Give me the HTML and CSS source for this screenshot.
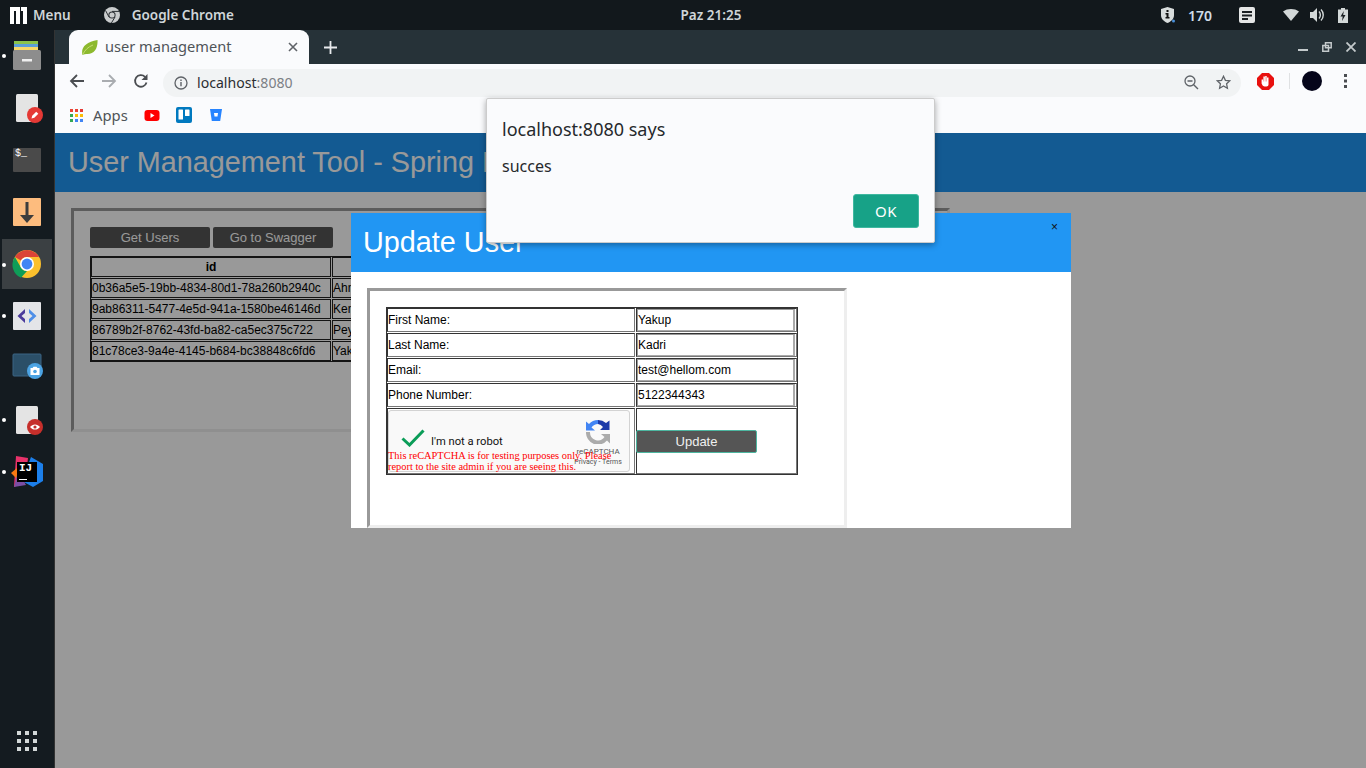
FILE: index.html
```html
<!DOCTYPE html>
<html lang="en">
<head>
    <meta charset="UTF-8">
    <meta name="viewport" content="width=device-width, initial-scale=1.0">
    <title>user management</title>
    <link rel="stylesheet" href="styles.css">
</head>
<body>

<div class="desktop">

    <!-- system panel -->
    <div class="topbar">
        <div class="topbar-left">
            <svg class="ico-menu" width="17" height="17" viewBox="0 0 17 17"><path fill="#fff" d="M0 0h10v17H6V4H4v13H0zM11 0h6v17h-4V4h-2z"/></svg>
            <span class="menu-label">Menu</span>
            <svg class="ico-chrome-small" width="16" height="16" viewBox="0 0 16 16"><circle cx="8" cy="8" r="8" fill="#c9cccd"/><circle cx="8" cy="8" r="3.600" fill="#2a2f33"/><circle cx="8" cy="8" r="2.600" fill="#c9cccd"/><path d="M8 4.400h7.400M5 10 1.600 3.600M11 10l-3.600 6" stroke="#2a2f33" stroke-width="1"/></svg>
            <span class="menu-label">Google Chrome</span>
        </div>
        <div class="clock">Paz 21:25</div>
        <div class="topbar-right">
            <svg class="ico-shield" width="15" height="18" viewBox="0 0 15 18"><path fill="#d8dcdc" d="M6.500 1 13 3v6c0 4-3 6.500-6.500 8C3 15.500 0 13 0 9V3z"/><rect x="5.500" y="4" width="2" height="2" fill="#111"/><path d="M4.500 7h3v4h1v1.500h-4V11h1V8.500h-1z" fill="#111"/><circle cx="12.500" cy="15" r="1.500" fill="#4a90d9"/></svg>
            <span class="tray-num">170</span>
            <svg class="ico-notes" width="16" height="16" viewBox="0 0 16 16"><rect width="16" height="16" rx="2" fill="#e4e6e6"/><path d="M3 4h10v2H3zM3 7.500h10v2H3zM3 11h6v2H3z" fill="#1a1f23"/></svg>
            <svg class="ico-wifi" width="16" height="12" viewBox="0 0 16 12"><path fill="#d3d8d8" d="M0 2.500C4.500-.8 11.500-.8 16 2.500L8 12z"/></svg>
            <svg class="ico-sound" width="15" height="14" viewBox="0 0 15 14"><path fill="#d3d8d8" d="M0 4h3l4-4v14l-4-4H0z"/><path d="M9 3.500c1.800 1.800 1.800 5.200 0 7M11 1.500c3 3 3 8 0 11" fill="none" stroke="#d3d8d8" stroke-width="1.400"/></svg>
            <svg class="ico-battery" width="10" height="15" viewBox="0 0 10 15"><path fill="#d3d8d8" d="M3 0h4v1.500h3V15H0V1.500h3z"/><path fill="#1a1f23" d="M5.800 3 2.500 8.500h2.200L4 13l3.500-6H5.200z"/></svg>
        </div>
    </div>

    <!-- dock -->
    <div class="dock">
        <div class="dock-list">
            <div class="dock-item running">
                <svg width="32" height="32" viewBox="0 0 32 32"><rect x="3" y="1" width="24" height="4" fill="#8bc34a"/><rect x="3" y="4" width="24" height="3" fill="#5c9fd8"/><rect x="3" y="7" width="24" height="4" fill="#f7d768"/><rect x="2" y="10" width="28" height="20" rx="1.500" fill="#8d8d8d"/><rect x="11" y="19" width="10" height="2.500" fill="#efefef"/></svg>
            </div>
            <div class="dock-item">
                <svg width="32" height="32" viewBox="0 0 32 32"><rect x="5" y="2" width="22" height="28" rx="1.500" fill="#e4e4e4"/><circle cx="24" cy="23" r="8" fill="#e53935"/><path d="m20.500 26.500.7-2.800 4-4 2.100 2.100-4 4z" fill="#fff"/></svg>
            </div>
            <div class="dock-item">
                <div class="term-icon">$_</div>
            </div>
            <div class="dock-item">
                <svg width="32" height="32" viewBox="0 0 32 32"><rect x="2" y="2" width="28" height="28" rx="1" fill="#fdbc7e"/><path d="M14.500 6h3v13H23l-7 8-7-8h5.500z" fill="#3d3d3d"/></svg>
            </div>
            <div class="dock-item active running">
                <svg width="32" height="32" viewBox="0 0 32 32"><circle cx="16" cy="16" r="14" fill="#fbc02d"/><path d="M3.900 9A14 14 0 0 1 28.100 9H16a7 7 0 0 0-6.100 3.500z" fill="#db4437"/><path d="M3.900 9 9.900 19.500A7 7 0 0 0 16 23l-6 6.800A14 14 0 0 1 3.900 9z" fill="#0f9d58"/><circle cx="16" cy="16" r="7" fill="#fff"/><circle cx="16" cy="16" r="5.400" fill="#4285f4"/></svg>
            </div>
            <div class="dock-item running">
                <svg width="32" height="32" viewBox="0 0 32 32"><rect x="2" y="2" width="28" height="28" rx="1" fill="#e4e5e8"/><path d="M14 9 6.500 16l7.500 7v-4l-3.500-3 3.500-3z" fill="#4b3b9c"/><path d="m18 9 7.500 7-7.500 7v-4l3.500-3-3.500-3z" fill="#4f8fe8"/></svg>
            </div>
            <div class="dock-item">
                <svg width="32" height="32" viewBox="0 0 32 32"><rect x="2" y="2" width="28" height="22" rx="1" fill="#2b4f68" stroke="#3a6583"/><circle cx="24" cy="19" r="8" fill="#4ba3e3"/><path d="M19.500 16h2l1-1.200h3l1 1.200h2v7h-9z" fill="#fff"/><circle cx="24" cy="19.500" r="1.800" fill="#4ba3e3"/></svg>
            </div>
            <div class="dock-item running">
                <svg width="32" height="32" viewBox="0 0 32 32"><rect x="5" y="2" width="22" height="28" rx="1.500" fill="#e4e4e4"/><circle cx="24" cy="23" r="8" fill="#c62f2b"/><path d="M19 23c2.600-3.400 7.400-3.400 10 0-2.600 3.400-7.400 3.400-10 0z" fill="#fff"/><circle cx="24" cy="23" r="1.600" fill="#c62f2b"/></svg>
            </div>
            <div class="dock-item running">
                <div class="ij-icon">
                    <svg width="32" height="32" viewBox="0 0 32 32"><path d="M5 0 17 2 14 26 3 31z" fill="#e8326a"/><path d="M20 1 32 8v17l-10 6-11-6z" fill="#1c7fea"/><path d="M0 17l6-5 4 8-4 3z" fill="#f97a12"/><path d="M3 31l4-16 8 14z" fill="#7b4ea3"/></svg>
                    <div class="ij-box">IJ</div>
                </div>
            </div>
        </div>
        <div class="dock-apps">
            <svg width="20" height="20" viewBox="0 0 20 20"><path fill="#d3d8d8" d="M0 0h4v4H0zM8 0h4v4H8zM16 0h4v4h-4zM0 8h4v4H0zM8 8h4v4H8zM16 8h4v4h-4zM0 16h4v4H0zM8 16h4v4H8zM16 16h4v4h-4z"/></svg>
        </div>
    </div>

    <!-- browser window -->
    <div class="browser">
        <div class="tabstrip">
            <div class="tab">
                <svg width="17" height="17" viewBox="0 0 17 17"><path d="M1.500 16C-.5 9 5 2.500 16.500 1c.5 8-3 14-10 14-2 0-3.500.3-5 1z" fill="#8cb92e"/><path d="M2 15c2-4 5-7 10-9" stroke="#c5dc72" stroke-width="1" fill="none"/></svg>
                <span class="tab-title">user management</span>
                <svg class="tab-close" width="10" height="10" viewBox="0 0 10 10"><path d="m1 1 8 8M9 1 1 9" stroke="#5f6368" stroke-width="1.600"/></svg>
            </div>
            <svg class="new-tab" width="13" height="13" viewBox="0 0 13 13"><path d="M6.500 0v13M0 6.500h13" stroke="#e8eaed" stroke-width="1.800"/></svg>
            <div class="win-controls">
                <svg width="10" height="10" viewBox="0 0 10 10"><rect y="7" width="10" height="2" fill="#c4cacc"/></svg>
                <svg width="10" height="10" viewBox="0 0 10 10"><path fill="none" stroke="#c4cacc" stroke-width="1.500" d="M3.500.800h5.700v5H3.500zM.800 3.500h5.700v5.700H.800z"/></svg>
                <svg width="10" height="10" viewBox="0 0 10 10"><path d="m.5.500 9 9M9.500.500l-9 9" stroke="#c4cacc" stroke-width="1.800"/></svg>
            </div>
        </div>

        <div class="toolbar">
            <div class="nav-btns">
                <svg width="16" height="16" viewBox="0 0 16 16"><path d="M15 8H2M8 2 2 8l6 6" fill="none" stroke="#4a4d51" stroke-width="1.800"/></svg>
                <svg width="16" height="16" viewBox="0 0 16 16"><path d="M1 8h13M8 2l6 6-6 6" fill="none" stroke="#a9acb0" stroke-width="1.800"/></svg>
                <svg width="16" height="16" viewBox="0 0 16 16"><path d="M13.500 9.500A5.800 5.800 0 1 1 12 3.800" fill="none" stroke="#4a4d51" stroke-width="1.800"/><path d="M14.500 1v6h-6z" fill="#4a4d51"/></svg>
            </div>
            <div class="omnibox">
                <svg class="omni-info" width="14" height="14" viewBox="0 0 14 14"><circle cx="7" cy="7" r="6" fill="none" stroke="#5f6368" stroke-width="1.300"/><path d="M6.300 6h1.400v4.200H6.300zM6.300 3.500h1.400v1.400H6.300z" fill="#5f6368"/></svg>
                <span class="url">localhost<span class="url-port">:8080</span></span>
                <div class="omni-actions">
                    <svg width="15" height="15" viewBox="0 0 15 15"><circle cx="6" cy="6" r="5" fill="none" stroke="#5f6368" stroke-width="1.300"/><path d="M3.500 6h5M9.700 9.700 14 14" stroke="#5f6368" stroke-width="1.400"/></svg>
                    <svg width="15" height="15" viewBox="0 0 15 15"><path d="m7.500 1.300 1.900 4 4.400.5-3.200 3 .8 4.400-3.900-2.200-3.900 2.200.8-4.400-3.200-3 4.400-.5z" fill="none" stroke="#5f6368" stroke-width="1.300"/></svg>
                </div>
            </div>
            <div class="ext-btns">
                <svg width="17" height="17" viewBox="0 0 17 17"><path d="M5 0h7l5 5v7l-5 5H5l-5-5V5z" fill="#e8100f"/><path fill="#fff" d="M4.600 6.500h1.500v2h.3V3.500h1.500v5h.3V3h1.500v5.500h.3V4.500h1.500v7c0 1.200-.8 2-2 2H7.500c-1 0-1.500-.5-2-1.200l-.9-1.800z"/></svg>
                <div class="ext-sep"></div>
                <div class="avatar"></div>
                <svg width="4" height="14" viewBox="0 0 4 14"><path fill="#4a4d51" d="M0 0h3v3H0zM0 5.500h3v3H0zM0 11h3v3H0z"/></svg>
            </div>
        </div>

        <div class="bookmarks">
            <svg class="bm-apps" width="13" height="13" viewBox="0 0 13 13"><path fill="#ea4335" d="M0 0h3v3H0zM5 0h3v3H5z"/><path fill="#e53935" d="M10 0h3v3h-3z"/><path fill="#34a853" d="M0 5h3v3H0zM0 10h3v3H0z"/><path fill="#fbbc05" d="M5 5h3v3H5zM10 5h3v3h-3z"/><path fill="#4285f4" d="M5 10h3v3H5zM10 10h3v3h-3z"/></svg>
            <span class="bm-label">Apps</span>
            <svg class="bm-yt" width="16" height="11" viewBox="0 0 15 11"><rect width="15" height="11" rx="3" fill="#f00"/><path d="M6 3v5l4-2.500z" fill="#fff"/></svg>
            <svg class="bm-trello" width="16" height="16" viewBox="0 0 16 16"><rect width="16" height="16" rx="2" fill="#0079bf"/><rect x="2.500" y="2.500" width="4.500" height="10" rx=".6" fill="#fff"/><rect x="9" y="2.500" width="4.500" height="6.500" rx=".6" fill="#fff"/></svg>
            <svg class="bm-bitbucket" width="12" height="12" viewBox="0 0 12 12"><path d="M0 0h12l-1.800 12H1.800z" fill="#2684ff"/><path d="M4 4h4l-.5 3.500h-3z" fill="#fff"/></svg>
        </div>

        <!-- page -->
        <div class="page">
            <div class="page-header">
                <h1>User Management Tool - Spring Boot</h1>
            </div>
            <div class="panel users-panel">
                <div class="users-btns">
                    <button class="btn-dark">Get Users</button>
                    <button class="btn-dark">Go to Swagger</button>
                </div>
                <table class="users-table">
                    <tr><th class="col-id">id</th><th class="col-name">First Name</th></tr>
                    <tr><td>0b36a5e5-19bb-4834-80d1-78a260b2940c</td><td>Ahmet</td></tr>
                    <tr><td>9ab86311-5477-4e5d-941a-1580be46146d</td><td>Kemal</td></tr>
                    <tr><td>86789b2f-8762-43fd-ba82-ca5ec375c722</td><td>Peyami</td></tr>
                    <tr><td>81c78ce3-9a4e-4145-b684-bc38848c6fd6</td><td>Yakup</td></tr>
                </table>
            </div>

            <div class="overlay"></div>

            <div class="modal">
                <div class="modal-header">
                    <h2>Update User</h2>
                    <span class="modal-close">×</span>
                </div>
                <div class="modal-body">
                    <div class="panel form-panel">
                        <table class="form-table">
                            <tr><td class="lbl">First Name:</td><td><input class="field" type="text" value="Yakup"></td></tr>
                            <tr><td class="lbl">Last Name:</td><td><input class="field" type="text" value="Kadri"></td></tr>
                            <tr><td class="lbl">Email:</td><td><input class="field" type="text" value="test@hellom.com"></td></tr>
                            <tr><td class="lbl">Phone Number:</td><td><input class="field" type="text" value="5122344343"></td></tr>
                            <tr>
                                <td class="captcha-cell">
                                    <div class="captcha">
                                        <svg class="captcha-check" width="24" height="18" viewBox="0 0 24 18"><path d="M1.500 9.500 8.500 16 22.500 1.500" fill="none" stroke="#0b9d58" stroke-width="3"/></svg>
                                        <span class="captcha-text">I'm not a robot</span>
                                        <div class="captcha-logo">
                                            <svg width="24" height="24" viewBox="0 0 24 24"><path d="M0 12h4a8 8 0 0 0 14.500 5L15 14h9v9.500l-3-3A12 12 0 0 1 0 12z" fill="#ababab"/><path d="M12 0v4a8 8 0 0 0-6.500 3.500L9 10.500H0V1.500L3 4a12 12 0 0 1 9-4z" fill="#4285f4"/><path d="M12 0a12 12 0 0 1 8 3l3.500-2.500V10H14l3-3a8 8 0 0 0-5-3z" fill="#1c3aa9"/></svg>
                                            <span class="captcha-brand">reCAPTCHA</span>
                                            <span class="captcha-terms">Privacy - Terms</span>
                                        </div>
                                    </div>
                                    <div class="captcha-warn">This reCAPTCHA is for testing purposes only. Please report to the site admin if you are seeing this.</div>
                                </td>
                                <td class="update-cell"><button class="btn-update">Update</button></td>
                            </tr>
                        </table>
                    </div>
                </div>
            </div>
        </div>
    </div>

    <!-- js alert -->
    <div class="alert">
        <div class="alert-title">localhost:8080 says</div>
        <div class="alert-msg">succes</div>
        <div class="alert-actions"><button class="alert-ok">OK</button></div>
    </div>
</div>

</body>
</html>
```

FILE: styles.css
```css
* { box-sizing: border-box; }

body {
    margin: 0;
    font-family: "Liberation Sans", Arial, sans-serif;
    overflow: hidden;
}
.desktop {
    position: relative;
    width: 1366px;
    height: 768px;
    display: grid;
    grid-template-columns: 55px 1fr;
    grid-template-rows: 30px 1fr;
    background: #141b20;
}

/* system panel */
.topbar {
    grid-column: 1 / 3;
    display: grid;
    grid-template-columns: 1fr auto 1fr;
    align-items: center;
    padding: 0 18px 0 10px;
    background: #12181c;
    color: #cfd5d8;
    font-family: "Noto Sans", sans-serif;
    font-size: 13.500px;
    font-weight: 600;
}
.topbar-left, .topbar-right { display: flex; align-items: center; }
.topbar-right { justify-content: flex-end; }
.ico-menu { margin-right: 6px; }
.ico-chrome-small { margin: 0 12px 0 33px; }
.clock { margin-left: 64px; }
.tray-num { margin: 0 27px 0 12px; color: #cfdde8; font-size: 14px; }
.ico-wifi { margin-left: 28px; }
.ico-sound { margin-left: 11px; }
.ico-battery { margin-left: 13px; }

/* dock */
.dock {
    display: flex;
    flex-direction: column;
    justify-content: space-between;
    background: #141b20;
    border-right: 1px solid #333;
}
.dock-item {
    position: relative;
    height: 52px;
    margin-left: 2px;
    width: 50px;
    display: flex;
    align-items: center;
    justify-content: center;
}
.dock-item.active {
    background: #3b4043;
    background-clip: padding-box;
    border-block: 1px solid transparent;
}
.dock-item.running::before {
    content: "";
    position: absolute;
    left: 0;
    top: 24px;
    width: 4px;
    height: 4px;
    border-radius: 50%;
    background: #fff;
}
.term-icon {
    width: 28px;
    height: 24px;
    padding: 0 2px;
    background: #4a4a4a;
    border-radius: 1px;
    color: #fff;
    font: 10px/12px "Liberation Mono", monospace;
}
.ij-icon { position: relative; width: 32px; height: 32px; }
.ij-icon svg { display: block; }
.ij-box {
    position: absolute;
    left: 6px;
    top: 6px;
    width: 20px;
    height: 20px;
    padding-left: 2px;
    background: #000;
    color: #fff;
    font: bold 11px/13px "Liberation Mono", monospace;
}
.ij-box::after {
    content: "";
    position: absolute;
    left: 2px;
    bottom: 2px;
    width: 8px;
    height: 1px;
    background: #fff;
}
.dock-apps { display: flex; justify-content: center; padding-bottom: 17px; padding-right: 1px; }

/* browser chrome */
.browser {
    position: relative;
    display: flex;
    flex-direction: column;
    min-height: 0;
    background: #fff;
}
.tabstrip {
    display: flex;
    align-items: flex-end;
    height: 34px;
    padding-left: 14px;
    background: #263238;
}
.tab {
    display: flex;
    align-items: center;
    width: 240px;
    height: 34px;
    padding: 0 11px 0 12px;
    background: #fafbfd;
    border-radius: 9px 9px 0 0;
}
.tab-title {
    flex: 1;
    margin: 0 0 2px 7px;
    color: #4f5458;
    font-family: "Noto Sans", sans-serif;
    font-size: 14.600px;
}
.new-tab { margin: 0 0 10px 15px; }
.win-controls {
    display: flex;
    gap: 14px;
    margin: 0 10px 12px auto;
}
.toolbar {
    display: flex;
    align-items: center;
    height: 34px;
    background: #fafbfd;
}
.nav-btns {
    display: flex;
    gap: 16px;
    padding-left: 14px;
    width: 108px;
}
.omnibox {
    display: flex;
    align-items: center;
    width: 1078px;
    height: 28px;
    margin-top: 3px;
    padding: 0 11px;
    background: #f1f3f4;
    border-radius: 14px;
    font-family: "Noto Sans", sans-serif;
    font-size: 14.100px;
}
.url { margin-left: 9px; color: #2b2e31; }
.url-port { color: #7c8085; }
.omni-actions { display: flex; gap: 17px; margin-left: auto; margin-right: -1px; }
.ext-btns { display: flex; align-items: center; padding-left: 16px; }
.ext-sep { width: 1px; height: 16px; margin: 0 12px 0 15px; background: #dfe1e3; }
.avatar { width: 20px; height: 20px; margin-right: 22px; border-radius: 50%; background: #05051a; }
.bookmarks {
    display: flex;
    align-items: center;
    height: 35px;
    padding: 0 0 1px 15px;
    background: #fafbfd;
    font-family: "Noto Sans", sans-serif;
    font-size: 14.800px;
    color: #4f5458;
}
.bm-label { margin-left: 10px; }
.bm-yt { margin-left: 16px; }
.bm-trello { margin-left: 16px; }
.bm-bitbucket { margin-left: 18px; }

/* page under the overlay */
.page { position: relative; flex: 1; background: #fff; }
.page-header {
    height: 59px;
    padding-left: 13px;
    background: #2196f3;
    color: #fff;
}
.page-header h1 {
    margin: 0;
    font-size: 28.800px;
    font-weight: 400;
    line-height: 59px;
}
.panel {
    border: 3px solid;
    border-color: #999 #eee #eee #999;
}
.users-panel {
    width: 879px;
    height: 224px;
    margin: 16px 0 0 16px;
    padding: 16px;
}
.users-btns { display: flex; gap: 3px; }
.btn-dark {
    width: 120px;
    height: 21px;
    padding: 0;
    background: #555;
    border: 0;
    border-radius: 2px;
    color: #fff;
    font-family: "Liberation Sans", sans-serif;
    font-size: 13px;
}
.users-table {
    margin-top: 8px;
    width: 600px;
    border: 0;
    border-spacing: 1px;
    box-shadow: inset 0 0 0 1px #222;
    font-size: 12px;
    table-layout: fixed;
}
.users-table th, .users-table td {
    height: 20px;
    padding: 0;
    border: 1px solid #222;
}
.col-id { width: 240px; }
.overlay {
    position: absolute;
    inset: 0;
    background: rgba(0, 0, 0, 0.4);
}

/* modal */
.modal {
    position: absolute;
    left: 296px;
    top: 80px;
    width: 720px;
    height: 315px;
    display: flex;
    flex-direction: column;
    background: #fff;
}
.modal-header {
    position: relative;
    height: 59px;
    flex: none;
    padding-left: 12px;
    background: #2196f3;
    color: #fff;
}
.modal-header h2 {
    margin: 0;
    font-size: 28.800px;
    font-weight: 400;
    line-height: 59px;
}
.modal-close {
    position: absolute;
    right: 13px;
    top: 7px;
    color: #111;
    font-size: 12px;
}
.modal-body { flex: 1; min-height: 0; padding: 16px 0 0 16px; }
.form-panel { width: 480px; height: 240px; padding: 16px 16px; }
.form-table {
    width: 412px;
    border: 0;
    border-spacing: 1px;
    box-shadow: inset 0 0 0 1px #333;
    font-size: 12px;
    table-layout: fixed;
}
.form-table td {
    height: 24px;
    padding: 0;
    border: 1px solid;
    border-color: #333 #777 #777 #333;
}
.form-table .lbl { width: 248px; }
.field {
    display: block;
    width: 158px;
    height: 22px;
    padding: 1px 0;
    border: 1px solid;
    border-width: 1px 2px 1px 1px;
    border-color: #999 #aaa #aaa #999;
    outline: none;
    background: #fff;
    color: #000;
    font-family: "Liberation Sans", sans-serif;
    font-size: 12px;
}
.form-table .captcha-cell { position: relative; height: 64px; padding: 1px 0; }
.captcha {
    position: relative;
    display: flex;
    align-items: center;
    width: 242px;
    height: 62px;
    padding: 0 0 0 12px;
    background: #f9f9f9;
    border: 1px solid #d3d3d3;
    border-radius: 3px;
}
.captcha-check { margin-top: -7px; }
.captcha-text {
    margin: 0 0 0 6px;
    color: #111;
    font-family: Roboto, sans-serif;
    font-size: 11.200px;
}
.captcha-logo {
    position: absolute;
    left: 185px;
    top: 9px;
    width: 48px;
    display: flex;
    flex-direction: column;
    align-items: center;
    font-family: Roboto, sans-serif;
    color: #555;
}
.captcha-brand { margin-top: 2px; font-size: 8px; line-height: 12px; }
.captcha-terms { font-size: 7px; line-height: 8px; white-space: nowrap; }
.captcha-warn {
    position: absolute;
    left: 0;
    top: 41px;
    width: 245px;
    color: #f00;
    font: 10.400px/11px "Liberation Serif", serif;
}
.btn-update {
    display: block;
    width: 121px;
    height: 23px;
    margin-left: -1px;
    padding: 0;
    background: #555;
    border: 1px solid #4db6a0;
    border-radius: 2px;
    color: #f0f0f0;
    font-family: "Liberation Sans", sans-serif;
    font-size: 13px;
}

/* js alert */
.alert {
    position: absolute;
    left: 486px;
    top: 98px;
    width: 449px;
    height: 145px;
    padding: 19px 15px 0;
    background: #fafbfd;
    border: 1px solid #ccc;
    border-radius: 2px;
    box-shadow: 0 2px 6px rgba(0, 0, 0, 0.35);
    font-family: "Noto Sans", sans-serif;
    color: #26292c;
}
.alert-title { font-size: 18px; line-height: 22px; }
.alert-msg { margin-top: 16px; font-size: 16px; line-height: 20px; }
.alert-actions { display: flex; justify-content: flex-end; margin-top: 18px; }
.alert-ok {
    width: 66px;
    height: 34px;
    padding: 0;
    background: #17a287;
    border: 1px solid #3fb8a0;
    border-radius: 3px;
    color: #fff;
    font-family: "Noto Sans", sans-serif;
    font-size: 15px;
    letter-spacing: 0.5px;
}
```
